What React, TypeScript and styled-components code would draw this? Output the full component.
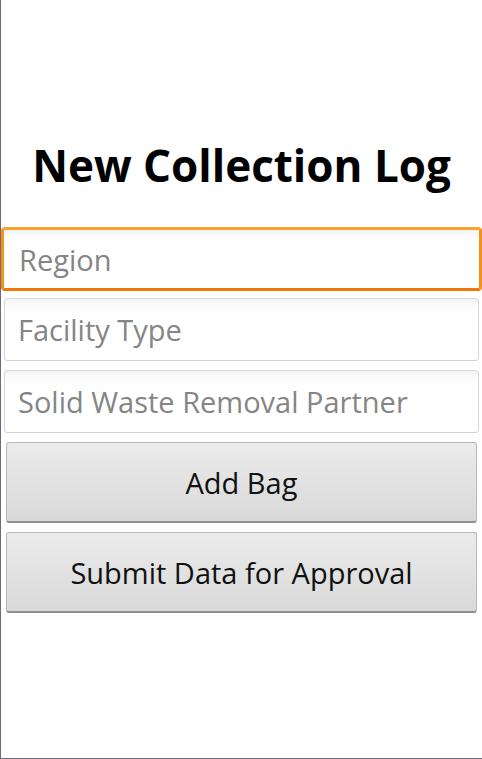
import styled, { createGlobalStyle } from "styled-components";

const GlobalStyle = createGlobalStyle`
  html, body {
    margin: 0;
    padding: 0;
    background: #ffffff;
  }
  * {
    box-sizing: border-box;
  }
`;

const fields = ["Region", "Facility Type", "Solid Waste Removal Partner"];

const Screen = styled.div`
  width: 482px;
  height: 759px;
  border-left: 1px solid #6b6a85;
  border-bottom: 1px solid #6b6a85;
  background: #ffffff;
  font-family: "Open Sans", "DejaVu Sans", sans-serif;
  padding-top: 137px;
`;

const Title = styled.h1`
  margin: 0 0 34px;
  text-align: center;
  font-size: 44px;
  font-weight: 700;
  line-height: 56px;
  color: #000000;
`;

const Form = styled.div`
  display: flex;
  flex-direction: column;
`;

const Field = styled.div<{ $focused?: boolean }>`
  height: ${(p) => (p.$focused ? "64px" : "63px")};
  margin: ${(p) => (p.$focused ? "0 0 7px 0" : "0 3px 9px 3px")};
  padding-left: ${(p) => (p.$focused ? "15px" : "13px")};
  display: flex;
  align-items: center;
  font-size: 29px;
  color: #858585;
  border-radius: 4px;
  border: ${(p) => (p.$focused ? "3px solid #f5901a" : "1px solid #d6d6d6")};
  border-top-color: ${(p) => (p.$focused ? "#f9a22c" : "#dcdcdc")};
  border-bottom-color: ${(p) => (p.$focused ? "#ef7808" : "#d2d2d2")};
  background: linear-gradient(#f2f2f2 0px, #fbfbfb 6px, #ffffff 14px);
`;

const Button = styled.button`
  height: 81px;
  margin: 0 5px 9px 5px;
  border: 1px solid #b9b9b9;
  border-bottom: 2px solid #8f8f8f;
  border-radius: 3px;
  background: linear-gradient(#ebebeb, #d9d9d9);
  font-family: "Open Sans", "DejaVu Sans", sans-serif;
  font-size: 29px;
  color: #111111;
  padding: 0;
`;

export default function App() {
  return (
    <>
      <GlobalStyle />
      <Screen>
        <Title>New Collection Log</Title>
        <Form>
          {fields.map((label, i) => (
            <Field key={label} $focused={i === 0}>
              {label}
            </Field>
          ))}
          <Button>Add Bag</Button>
          <Button>Submit Data for Approval</Button>
        </Form>
      </Screen>
    </>
  );
}
